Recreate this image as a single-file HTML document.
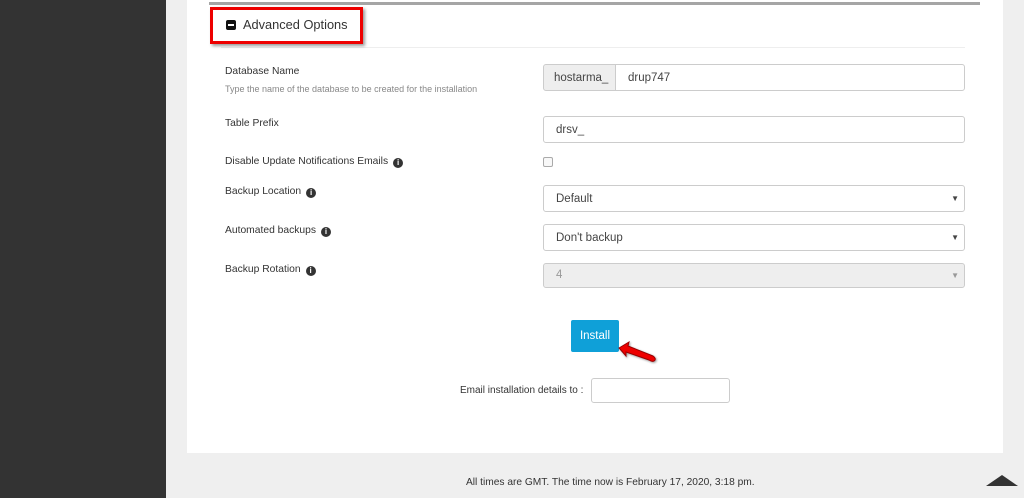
<!DOCTYPE html><html><head><style>
body{margin:0;width:1024px;height:498px;background:#efefef;font-family:"Liberation Sans",sans-serif;position:relative;overflow:hidden}
.a{position:absolute}
.lbl{font-size:10.3px;color:#333}
.in{position:absolute;background:#fff;border:1px solid #ccc;border-radius:3px;box-sizing:border-box;font-size:11.5px;color:#444;padding-left:12px;line-height:26px}
.i{display:inline-block;width:10px;height:10px;border-radius:50%;background:#333;color:#fff;font-size:8px;line-height:10px;text-align:center;font-weight:bold;margin-left:5px;vertical-align:-1px}
.car{position:absolute;right:5px;top:0;font-size:8px;color:#444}
</style></head><body>
<div class="a" style="left:0;top:0;width:166px;height:498px;background:#333"></div>
<div class="a" style="left:187px;top:0;width:816px;height:453px;background:#fff"></div>
<div class="a" style="left:209px;top:2px;width:771px;height:3px;background:#a5a5a5"></div>
<div class="a" style="left:221px;top:47px;width:744px;height:1px;background:#eee"></div>
<div class="a" style="left:210px;top:7px;width:153px;height:37px;border:3px solid #e00;box-sizing:border-box;box-shadow:2px 2px 3px rgba(0,0,0,.4)"></div>
<div class="a" style="left:226px;top:20px;width:10px;height:10px;background:#111;border-radius:2px"><div style="margin:4px 2px;height:2px;background:#fff"></div></div>
<div class="a" style="left:243px;top:17px;font-size:12.8px;color:#333">Advanced Options</div>
<div class="a lbl" style="left:225px;top:66px">Database Name</div>
<div class="a" style="left:225px;top:84px;font-size:9px;color:#888">Type the name of the database to be created for the installation</div>
<div class="in" style="left:543px;top:64px;width:73px;height:27px;background:#eee;border-radius:3px 0 0 3px;padding-left:10px">hostarma_</div>
<div class="in" style="left:615px;top:64px;width:350px;height:27px;border-radius:0 3px 3px 0">drup747</div>
<div class="a lbl" style="left:225px;top:118px">Table Prefix</div>
<div class="in" style="left:543px;top:116px;width:422px;height:27px">drsv_</div>
<div class="a lbl" style="left:225px;top:156px">Disable Update Notifications Emails<span class="i">i</span></div>
<div class="a" style="left:543px;top:157px;width:8px;height:8px;border:1px solid #aaa;border-radius:2px;background:#f8f8f8"></div>
<div class="a lbl" style="left:225px;top:186px">Backup Location<span class="i">i</span></div>
<div class="in" style="left:543px;top:185px;width:422px;height:27px">Default<span class="car">▼</span></div>
<div class="a lbl" style="left:225px;top:225px">Automated backups<span class="i">i</span></div>
<div class="in" style="left:543px;top:224px;width:422px;height:27px">Don't backup<span class="car">▼</span></div>
<div class="a lbl" style="left:225px;top:264px">Backup Rotation<span class="i">i</span></div>
<div class="in" style="left:543px;top:263px;width:422px;height:25px;background:#eee;color:#999;line-height:23px">4<span class="car" style="color:#999">▼</span></div>
<div class="a" style="left:571px;top:320px;width:48px;height:32px;background:#0fa0d8;border-radius:2px;color:#fff;font-size:11.5px;line-height:32px;text-align:center">Install</div>
<svg class="a" style="left:615px;top:340px" width="45" height="28"><path d="M4 8 L14 2 L13 6 L38 16 Q42 19 39 21 Q37 22 34 20 L11 12 L11 16 Z" fill="#e00" stroke="#900" stroke-width="1" style="filter:drop-shadow(1px 1px 1px rgba(0,0,0,.4))"/></svg>
<div class="a lbl" style="left:460px;top:385px;font-size:10px">Email installation details to :</div>
<div class="in" style="left:591px;top:378px;width:139px;height:25px"></div>
<div class="a" style="left:466px;top:477px;font-size:10.2px;color:#333">All times are GMT. The time now is February 17, 2020, 3:18 pm.</div>
<div class="a" style="left:986px;top:475px;width:0;height:0;border-left:16px solid transparent;border-right:16px solid transparent;border-bottom:11px solid #333"></div>
</body></html>
